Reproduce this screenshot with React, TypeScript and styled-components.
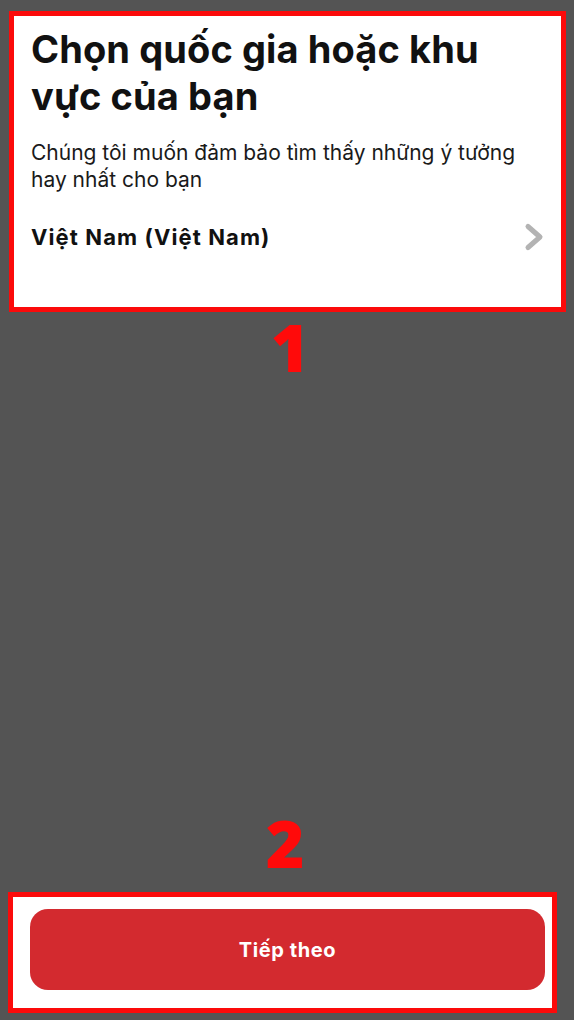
import styled, { createGlobalStyle } from 'styled-components';

const GlobalStyle = createGlobalStyle`
  html, body {
    margin: 0;
    padding: 0;
    background: #545454;
  }
  body {
    font-family: Inter, "Noto Sans", sans-serif;
    -webkit-font-smoothing: antialiased;
  }
`;

const Screen = styled.div`
  width: 574px;
  height: 1020px;
  display: flex;
  flex-direction: column;
  background: #545454;
  overflow: hidden;
`;

const Frame = styled.section<{ $top: number; $left: number; $width: number; $height: number }>`
  box-sizing: border-box;
  flex-shrink: 0;
  margin-top: ${(p) => p.$top}px;
  margin-left: ${(p) => p.$left}px;
  width: ${(p) => p.$width}px;
  height: ${(p) => p.$height}px;
  border: 5px solid #fb0a0a;
  background: #fff;
  display: flex;
  flex-direction: column;
`;

const CountryCard = styled.div`
  padding: 10px 16px 0 17px;
  display: flex;
  flex-direction: column;
`;

const Title = styled.h1`
  margin: 0;
  font-size: 38px;
  line-height: 47px;
  font-weight: 700;
  color: #111;
  letter-spacing: 0.1px;
`;

const Subtitle = styled.p`
  margin: 19px 0 0;
  font-size: 21px;
  line-height: 27px;
  color: #1a1a1a;
  font-weight: 400;
  letter-spacing: 0;
`;

const CountryRow = styled.div`
  margin-top: 29px;
  display: flex;
  align-items: center;
  justify-content: space-between;
`;

const CountryName = styled.span`
  font-size: 22px;
  font-weight: 700;
  color: #111;
  letter-spacing: 1.1px;
`;

const Chevron = styled.svg`
  width: 22px;
  height: 30px;
`;

const Marker = styled.div<{ $top: number; $shift: number }>`
  margin-top: ${(p) => p.$top}px;
  margin-left: ${(p) => p.$shift}px;
  align-self: center;
  font-family: "Open Sans", "Noto Sans", sans-serif;
  font-weight: 800;
  font-size: 66px;
  line-height: 66px;
  color: #ff0a0a;
`;

const Spacer = styled.div`
  flex: 1;
`;

const ActionArea = styled.div`
  padding: 12px 7px 0 17px;
`;

const NextButton = styled.button`
  width: 100%;
  height: 81px;
  border: none;
  border-radius: 18px;
  background: #d32a2f;
  color: #fff;
  font-family: Inter, "Noto Sans", sans-serif;
  font-size: 20px;
  font-weight: 700;
  letter-spacing: 0.6px;
  cursor: pointer;
`;

const BottomGap = styled.div`
  height: 7px;
  flex-shrink: 0;
`;

export default function App() {
  return (
    <>
      <GlobalStyle />
      <Screen>
        <Frame $top={11} $left={9} $width={557} $height={301}>
          <CountryCard>
            <Title>Chọn quốc gia hoặc khu vực của bạn</Title>
            <Subtitle>Chúng tôi muốn đảm bảo tìm thấy những ý tưởng hay nhất cho bạn</Subtitle>
            <CountryRow>
              <CountryName>Việt Nam (Việt Nam)</CountryName>
              <Chevron viewBox="0 0 22 30">
                <path d="M5 4.5 L17 15 L5 25.5" fill="none" stroke="#b3b3b3" strokeWidth="5" strokeLinecap="round" strokeLinejoin="round" />
              </Chevron>
            </CountryRow>
          </CountryCard>
        </Frame>
        <Marker $top={1} $shift={6}>1</Marker>
        <Spacer />
        <Marker $top={0} $shift={-4}>2</Marker>
        <Frame $top={17} $left={8} $width={549} $height={121}>
          <ActionArea>
            <NextButton>Tiếp theo</NextButton>
          </ActionArea>
        </Frame>
        <BottomGap />
      </Screen>
    </>
  );
}
